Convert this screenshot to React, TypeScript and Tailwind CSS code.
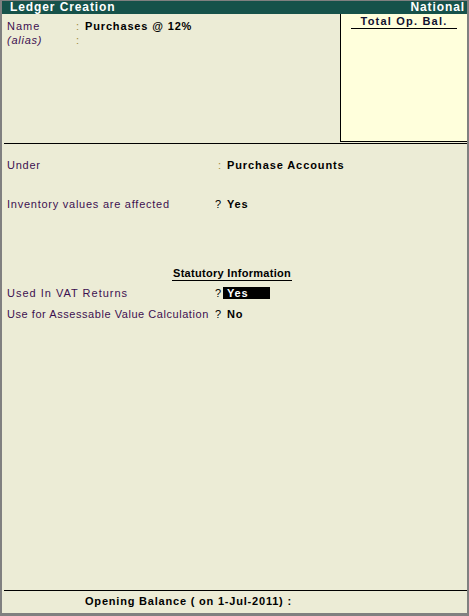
export default function App() {
  const font = { fontFamily: '"Liberation Sans", Arial, sans-serif' };
  return (
    <div className="w-[469px] h-[616px] bg-[#808080] pt-px pl-[2px] pr-[2px] pb-[3px]" style={font}>
      <div className="w-full h-full bg-[#ececd6] flex flex-col text-[11px] leading-[14px] tracking-[0.75px]">
        {/* title bar */}
        <div className="h-[13px] bg-[#16524a] flex items-center justify-between pl-[8px] pr-[2px] text-white font-bold text-[12px] leading-[13px] tracking-[0.9px]">
          <span>Ledger Creation</span>
          <span>National</span>
        </div>

        {/* name block + balance box */}
        <div className="flex h-[128px]">
          <div className="flex-1 pt-[5px] pl-[5px]">
            <div className="flex">
              <span className="w-[69px] text-[#3c1050] tracking-[1px]">Name</span>
              <span className="w-[9px] text-[#9c8a3a]">:</span>
              <span className="font-bold text-black tracking-[0.85px]">Purchases @ 12%</span>
            </div>
            <div className="flex">
              <span className="w-[69px] italic text-[#3c1050]">(alias)</span>
              <span className="w-[9px] text-[#9c8a3a]">:</span>
            </div>
          </div>
          <div className="w-[127px] bg-[#ffffdc] border-l border-b border-black pt-px">
            <div className="mx-[10px] border-b border-black text-center font-bold text-[#101030] leading-[13px] tracking-[1.2px]">
              Total Op. Bal.
            </div>
          </div>
        </div>

        <div className="mt-px ml-[2px] border-t border-black" />

        {/* ledger details */}
        <div className="flex flex-col pl-[5px] pt-[14px]">
          <div className="flex">
            <span className="w-[211px] text-[#3c1050]">Under</span>
            <span className="w-[9px] text-[#9c8a3a]">:</span>
            <span className="font-bold text-black tracking-[0.9px]">Purchase Accounts</span>
          </div>
          <div className="flex mt-[25px]">
            <span className="w-[208px] text-[#3c1050]">Inventory values are affected</span>
            <span className="w-[12px] text-black">?</span>
            <span className="font-bold text-black tracking-[0.85px]">Yes</span>
          </div>

          <div className="mt-[55px] pl-[165px]">
            <span className="inline-block border-b border-black font-bold text-black leading-[13px] px-px tracking-[0.3px]">
              Statutory Information
            </span>
          </div>
          <div className="flex mt-[5px] items-center">
            <span className="w-[208px] text-[#3c1050] tracking-[1px]">Used In VAT Returns</span>
            <span className="w-[8px] text-black">?</span>
            <span className="w-[47px] h-[12px] bg-black text-white font-bold leading-[12px] pl-[4px] tracking-[0.85px]">Yes</span>
          </div>
          <div className="flex mt-[7px]">
            <span className="w-[208px] text-[#3c1050] whitespace-nowrap tracking-[0.55px]">Use for Assessable Value Calculation</span>
            <span className="w-[12px] text-black">?</span>
            <span className="font-bold text-black tracking-[0.85px]">No</span>
          </div>
        </div>

        <div className="flex-1" />

        {/* footer */}
        <div className="ml-[2px] border-t border-black" />
        <div className="h-[22px] pl-[83px] pt-[3px] font-bold text-black tracking-[0.8px]">
          Opening Balance ( on 1-Jul-2011) :
        </div>
      </div>
    </div>
  );
}
